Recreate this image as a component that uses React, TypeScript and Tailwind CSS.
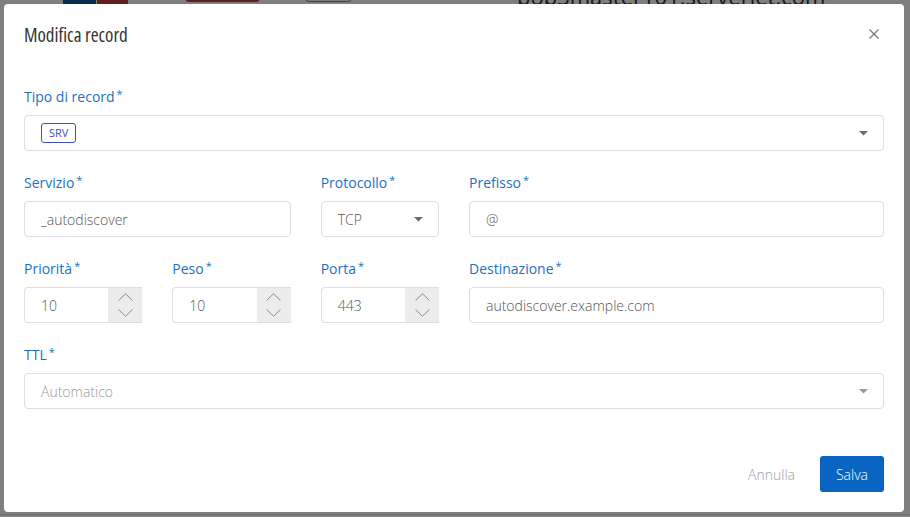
import React from 'react';

const Label: React.FC<{ text: string }> = ({ text }) => (
  <label className="block h-5 mb-2 text-[14px] leading-5 text-[#1d6fc1]">
    {text}
    <sup className="ml-[2px] text-[11px] top-[-4px]">*</sup>
  </label>
);

const Caret: React.FC<{ color?: string }> = ({ color = '#6a6a6a' }) => (
  <svg width="9" height="5" viewBox="0 0 9 5">
    <path d="M0 0h9L4.5 4.5z" fill={color} />
  </svg>
);

const TextInput: React.FC<{ value: string }> = ({ value }) => (
  <div className="h-9 flex items-center px-4 border border-[#dedede] rounded-[4px] text-[14px] font-light text-[#555] bg-white">
    {value}
  </div>
);

const NumberInput: React.FC<{ value: string }> = ({ value }) => (
  <div className="h-9 flex border border-[#dedede] border-r-0 rounded-[4px] rounded-r-none bg-white">
    <div className="flex-1 flex items-center px-4 text-[14px] font-light text-[#555]">{value}</div>
    <div className="w-[34px] bg-[#ececec] flex flex-col items-center justify-center gap-[8px]">
      <svg width="15" height="8" viewBox="0 0 15 8" fill="none" stroke="#8a8a8a" strokeWidth="1">
        <path d="M0.5 7.5L7.5 0.8L14.5 7.5" />
      </svg>
      <svg width="15" height="8" viewBox="0 0 15 8" fill="none" stroke="#8a8a8a" strokeWidth="1">
        <path d="M0.5 0.5L7.5 7.2L14.5 0.5" />
      </svg>
    </div>
  </div>
);

export default function App() {
  return (
    <div className="relative w-[910px] h-[517px] overflow-hidden bg-white font-['Open_Sans',sans-serif]">
      {/* page behind the dialog */}
      <div className="absolute inset-0">
        <div className="flex items-end h-[4px] relative">
          <div className="absolute left-[63px] top-[-20px] w-[33px] h-[24px] bg-[#14599f]" />
          <div className="absolute left-[97px] top-[-20px] w-[31px] h-[24px] bg-[#c73a3a]" />
          <div className="absolute left-[185px] top-[-20px] w-[75px] h-[22px] border-2 border-[#c24040] rounded-[4px]" />
          <div className="absolute left-[305px] top-[-20px] w-[47px] h-[22px] border border-[#5b86c2] rounded-[4px]" />
          <div className="absolute left-[517px] top-[-15px] text-[22px] leading-[22px] text-[#333] whitespace-nowrap">
            pop3master101.serverlet.com
          </div>
        </div>
        <div className="absolute left-0 right-0 top-[514px] h-px bg-[#ddd]" />
      </div>
      <div className="absolute inset-0 bg-black/50" />

      {/* dialog */}
      <div className="absolute left-[4px] top-[4px] w-[900px] h-[508px] bg-white rounded-[4px] flex flex-col">
        <div className="flex items-center justify-between h-[62px] pl-5 pr-[25px] pt-[1px]">
          <h2 className="text-[19px] font-stretch-condensed text-[#333] font-['Open_Sans',sans-serif]">
            Modifica record
          </h2>
          <svg width="10" height="10" viewBox="0 0 10 10" stroke="#777" strokeWidth="1.2" className="-mt-[3px]">
            <path d="M0.5 0.5L9.5 9.5M9.5 0.5L0.5 9.5" />
          </svg>
        </div>

        <div className="px-5 pt-[21px]">
          <div>
            <Label text="Tipo di record" />
            <div className="h-9 flex items-center justify-between pl-4 pr-[15px] border border-[#dedede] rounded-[4px]">
              <span className="h-5 px-[7px] flex items-center border border-[#3f4fb8] rounded-[3px] text-[11px] text-[#3f4fb8]">
                SRV
              </span>
              <Caret />
            </div>
          </div>

          <div className="grid grid-cols-6 gap-x-[30px] mt-[22px]">
            <div className="col-span-2">
              <Label text="Servizio" />
              <TextInput value="_autodiscover" />
            </div>
            <div>
              <Label text="Protocollo" />
              <div className="h-9 flex items-center justify-between pl-4 pr-[15px] border border-[#dedede] rounded-[4px] text-[14px] font-light text-[#555]">
                TCP
                <Caret />
              </div>
            </div>
            <div className="col-span-3">
              <Label text="Prefisso" />
              <TextInput value="@" />
            </div>
          </div>

          <div className="grid grid-cols-6 gap-x-[30px] mt-[22px]">
            <div>
              <Label text="Priorità" />
              <NumberInput value="10" />
            </div>
            <div>
              <Label text="Peso" />
              <NumberInput value="10" />
            </div>
            <div>
              <Label text="Porta" />
              <NumberInput value="443" />
            </div>
            <div className="col-span-3">
              <Label text="Destinazione" />
              <TextInput value="autodiscover.example.com" />
            </div>
          </div>

          <div className="mt-[22px]">
            <Label text="TTL" />
            <div className="h-9 flex items-center justify-between pl-4 pr-[15px] border border-[#dedede] rounded-[4px] text-[14px] font-light text-[#999]">
              Automatico
              <Caret color="#9a9a9a" />
            </div>
          </div>
        </div>

        <div className="flex items-center justify-end gap-[25px] px-5 mt-auto mb-5">
          <button className="text-[14px] font-light text-[#a0a0a0]">Annulla</button>
          <button className="h-9 w-16 rounded-[3px] bg-[#0a64c2] text-white text-[14px] font-light">Salva</button>
        </div>
      </div>
    </div>
  );
}
